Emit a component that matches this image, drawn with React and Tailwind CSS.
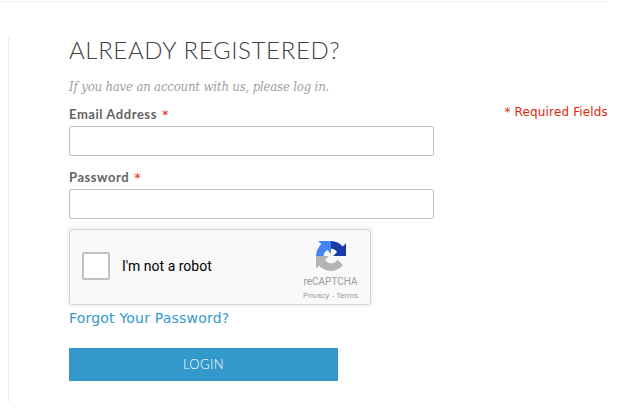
import React from 'react';

function RecaptchaLogo() {
  return (
    <svg viewBox="0 0 64 64" className="w-[30px] h-[30px]">
      <path fill="#1c3aa9" d="M64 31.955l-.033-1.37V4.687l-7.16 7.16C50.948 4.674 42.033.093 32.05.093c-10.4 0-19.622 4.96-25.458 12.64l11.736 11.86a15.55 15.55 0 0 1 4.754-5.334c2.05-1.6 4.952-2.906 8.968-2.906.485 0 .86.057 1.135.163 4.976.393 9.288 3.14 11.828 7.124l-8.307 8.307L64 31.953" />
      <path fill="#4285f4" d="M31.862.094l-1.37.033H4.594l7.16 7.16C4.58 13.147 0 22.06 0 32.046c0 10.4 4.96 19.622 12.64 25.458L24.5 45.768a15.55 15.55 0 0 1-5.334-4.754c-1.6-2.05-2.906-4.952-2.906-8.968 0-.485.057-.86.163-1.135.393-4.976 3.14-9.288 7.124-11.828l8.307 8.307L31.86.095" />
      <path fill="#b5b5b5" d="M.001 32.045l.033 1.37v25.898l7.16-7.16c5.86 7.173 14.774 11.754 24.76 11.754 10.4 0 19.622-4.96 25.458-12.64l-11.736-11.86a15.55 15.55 0 0 1-4.754 5.334c-2.05 1.6-4.952 2.906-8.968 2.906-.485 0-.86-.057-1.135-.163-4.976-.393-9.288-3.14-11.828-7.124l8.307-8.307c-10.522.04-22.4.066-27.295-.005" />
    </svg>
  );
}

function Field({ id, label, type }) {
  return (
    <div className="h-[63px]">
      <label htmlFor={id} className="flex h-[21px] items-center gap-[5px] whitespace-nowrap pb-[2px]">
        <span className="font-['Lato',sans-serif] text-[13px] font-bold tracking-[0.55px] text-[#636363]">{label}</span>
        <span className="font-['DejaVu_Sans',sans-serif] text-[13px] text-[#df280a]">*</span>
      </label>
      <input id={id} type={type} className="block h-[30px] w-[365px] rounded-[2px] border border-[#c0c0c0] bg-white px-2 outline-none" />
    </div>
  );
}

function Recaptcha() {
  return (
    <div className="flex h-[76px] w-[302px] rounded-[3px] border border-[#d3d3d3] bg-[#f9f9f9] shadow-[0_0_4px_1px_rgba(0,0,0,0.08)]">
      <div className="flex flex-1 items-center gap-3 pl-3 pb-[2px]">
        <button aria-label="I'm not a robot" className="h-7 w-7 rounded-[2px] border-2 border-[#c1c1c1] bg-white"></button>
        <span className="font-['Roboto',sans-serif] text-[14px] text-black">I'm not a robot</span>
      </div>
      <div className="flex w-[79px] flex-col items-center pt-[11px] text-[#9b9b9b]">
        <RecaptchaLogo />
        <span className="mt-[5px] font-['Roboto',sans-serif] text-[10px] leading-[12px]">reCAPTCHA</span>
        <span className="mt-[3px] font-['Liberation_Sans',sans-serif] text-[8px] leading-[10px]">Privacy - Terms</span>
      </div>
    </div>
  );
}

export default function App() {
  return (
    <div className="h-[413px] w-[619px] overflow-hidden bg-white pt-px">
      <div className="w-[608px] border-t border-[#ededed] pt-[35px]">
        {/* Login column */}
        <div className="ml-2 flex h-[365px] justify-between border-l border-[#ededed] pl-[60px]">
          <form className="w-[365px]" onSubmit={(e) => e.preventDefault()}>
            <h2 className="h-[27px] whitespace-nowrap font-['Lato',sans-serif] text-[24px] font-light leading-[26px] tracking-[0.64px] text-[#404040]">
              ALREADY REGISTERED?
            </h2>
            <p className="mt-[13px] h-[20px] whitespace-nowrap font-['DejaVu_Serif_Condensed','DejaVu_Serif',serif] text-[13px] italic leading-[20px] tracking-[-0.16px] text-[#a0a0a0]">
              If you have an account with us, please log in.
            </p>
            <div className="mt-[8px]">
              <Field id="email" label="Email Address" type="email" />
              <Field id="pass" label="Password" type="password" />
            </div>
            <div className="-mt-[2px]">
              <Recaptcha />
            </div>
            <a href="#" className="mt-[3px] block h-5 whitespace-nowrap font-['DejaVu_Sans',sans-serif] text-[14px] leading-[20px] tracking-[0.2px] text-[#3399cc]">
              Forgot Your Password?
            </a>
            <button type="submit" className="mt-5 block h-[33px] w-[269px] bg-[#3399cc] font-['Lato',sans-serif] text-[13px] font-light tracking-[0.4px] text-white">
              LOGIN
            </button>
          </form>
          <p className="mt-[66px] whitespace-nowrap font-['DejaVu_Sans',sans-serif] text-[12px] leading-[18px] tracking-[0.15px] text-[#df280a]">
            * Required Fields
          </p>
        </div>
      </div>
    </div>
  );
}
